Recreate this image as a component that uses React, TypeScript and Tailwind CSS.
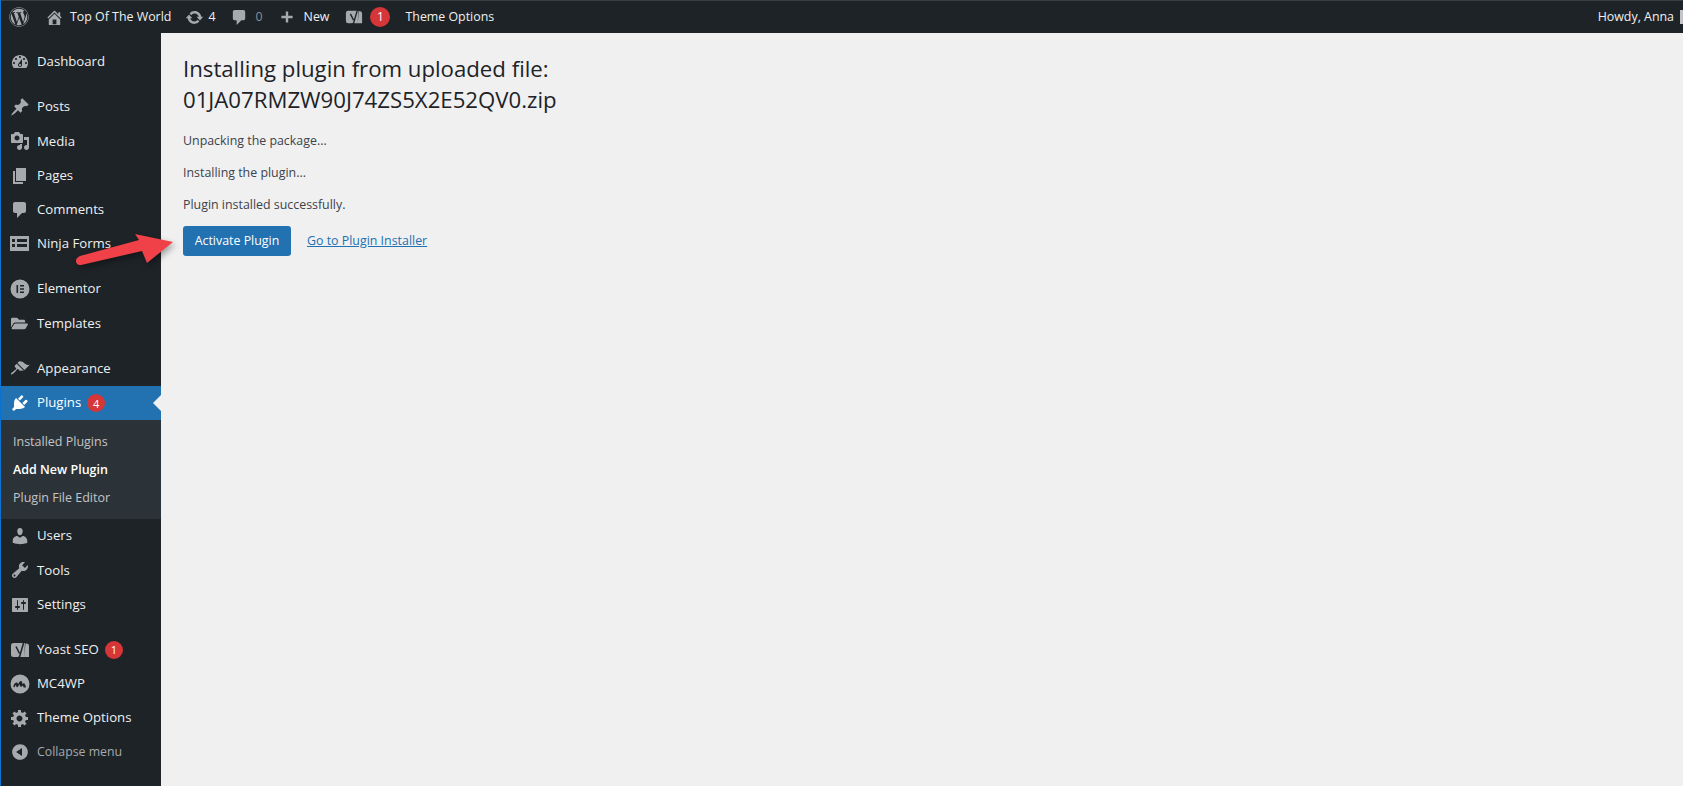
import React from 'react';
import { FaWordpress, FaFolderOpen } from 'react-icons/fa';

const font = 'font-["Open_Sans",sans-serif]';

// dashicons, redrawn inline at their own 20x20 grid
const icons: Record<string, string> = {
  home: 'M16 8.5l1.53 1.53-1.06 1.06L10 4.62l-6.47 6.47-1.06-1.06L10 2.5l4 4v-2h2v4zm-6-2.46l6 5.99V18H4v-5.97zM12 17v-5H8v5h4z',
  update: 'M10.2 3.28c3.53 0 6.43 2.61 6.92 6h2.08l-3.5 4-3.5-4h2.32c-.45-1.97-2.21-3.45-4.32-3.45-1.45 0-2.73.71-3.54 1.78L4.95 5.66C6.23 4.2 8.11 3.28 10.2 3.28zm-.4 13.44c-3.52 0-6.43-2.61-6.92-6H.8l3.5-4c1.17 1.33 2.33 2.67 3.5 4H5.48c.45 1.97 2.21 3.45 4.32 3.45 1.45 0 2.73-.71 3.54-1.78l1.71 1.95c-1.28 1.46-3.15 2.38-5.25 2.38z',
  comment: 'M5 2h9c1.1 0 2 .9 2 2v7c0 1.1-.9 2-2 2h-2l-5 5v-5H5c-1.1 0-2-.9-2-2V4c0-1.1.9-2 2-2z',
  plus: 'M17 8.5v3h-5.5V17h-3v-5.5H3v-3h5.5V3h3v5.5z',
  dashboard: 'M3.76 16h12.48c1.1-1.37 1.76-3.11 1.76-5 0-4.42-3.58-8-8-8s-8 3.58-8 8c0 1.89.66 3.63 1.76 5zM10 4c.55 0 1 .45 1 1s-.45 1-1 1-1-.45-1-1 .45-1 1-1zM6 6c.55 0 1 .45 1 1s-.45 1-1 1-1-.45-1-1 .45-1 1-1zm8 0c.55 0 1 .45 1 1s-.45 1-1 1-1-.45-1-1 .45-1 1-1zm-5.37 5.55L12 7v6c0 1.1-.9 2-2 2s-2-.9-2-2c0-.57.24-1.08.63-1.45zM4 10c.55 0 1 .45 1 1s-.45 1-1 1-1-.45-1-1 .45-1 1-1zm12 0c.55 0 1 .45 1 1s-.45 1-1 1-1-.45-1-1 .45-1 1-1zm-5 3c0-.55-.45-1-1-1s-1 .45-1 1 .45 1 1 1 1-.45 1-1z',
  pin: 'M10.44 3.02l1.82-1.82 6.36 6.35-1.83 1.82c-1.05-.68-2.48-.57-3.41.36l-.75.75c-.92.93-1.04 2.35-.35 3.41l-1.83 1.82-2.41-2.41-2.8 2.79c-.42.42-3.38 2.71-3.8 2.29s1.86-3.39 2.28-3.81l2.79-2.79L4.1 9.36l1.83-1.82c1.05.69 2.48.57 3.4-.36l.75-.75c.93-.92 1.05-2.35.36-3.41z',
  media: 'M13 11V4c0-.55-.45-1-1-1h-1.67L9 1H5L3.67 3H2c-.55 0-1 .45-1 1v7c0 .55.45 1 1 1h10c.55 0 1-.45 1-1zM7 4.5c1.38 0 2.5 1.12 2.5 2.5S8.38 9.5 7 9.5 4.5 8.38 4.5 7 5.62 4.5 7 4.5zM14 6h5v10.5c0 1.38-1.12 2.5-2.5 2.5S14 17.88 14 16.5s1.12-2.5 2.5-2.5c.17 0 .34.02.5.05V9h-3V6zm-4 8.05V13h2v3.5c0 1.38-1.12 2.5-2.5 2.5S7 17.88 7 16.5 8.12 14 9.5 14c.17 0 .34.02.5.05z',
  page: 'M6 15V2h10v13H6zm-1 1h8v2H3V5h2v11z',
  appearance: 'M14.48 11.06L7.41 3.99l1.5-1.5c.5-.56 2.3-.47 3.51.32 1.21.8 1.43 1.28 2.91 2.1 1.18.64 2.45 1.26 4.45.85zm-.71.71L6.7 4.7 4.93 6.47c-.39.39-.39 1.02 0 1.41l1.06 1.06c.39.39.39 1.03 0 1.42-.6.6-1.43 1.11-2.21 1.69-.35.26-.7.53-1.01.84C1.43 13.23.4 14.75 1.02 15.37c.62.61 2.14-.41 3.47-1.75.31-.31.59-.66.85-1.01.58-.78 1.08-1.61 1.69-2.21.39-.39 1.02-.39 1.41 0l1.06 1.06c.39.39 1.02.39 1.41 0z',
  plugin: 'M13.11 4.36L9.87 7.6 8 5.73l3.24-3.24c.35-.34 1.05-.2 1.56.32.52.51.66 1.21.31 1.55zm-8 1.77l.91-1.12 9.01 9.01-1.19.84c-.71.71-2.63 1.16-3.82 1.16H6.14L4.9 17.26c-.59.59-1.54.59-2.12 0-.59-.58-.59-1.53 0-2.12l1.24-1.24v-3.88c0-1.13.4-3.19 1.09-3.89zm7.26 3.97l3.24-3.24c.34-.35 1.04-.21 1.55.31.52.51.66 1.21.31 1.55l-3.24 3.25z',
  users: 'M10 9.25c-2.27 0-2.73-3.44-2.73-3.44C7 4.02 7.82 2 9.97 2c2.16 0 2.98 2.02 2.71 3.81 0 0-.41 3.44-2.68 3.44zm0 2.57L12.72 10c2.39 0 4.52 2.33 4.52 4.53v2.49s-3.65 1.13-7.24 1.13c-3.65 0-7.24-1.13-7.24-1.13v-2.49c0-2.25 1.94-4.48 4.47-4.48z',
  tools: 'M16.68 9.77c-1.34 1.34-3.3 1.67-4.95.99l-5.41 6.52c-.99.99-2.59.99-3.58 0s-.99-2.59 0-3.57l6.52-5.42c-.68-1.65-.35-3.61.99-4.95 1.28-1.28 3.12-1.62 4.72-1.06l-2.89 2.89 2.82 2.82 2.86-2.87c.53 1.58.18 3.39-1.08 4.65zM3.81 16.21c.4.39 1.04.39 1.43 0 .4-.4.4-1.04 0-1.43-.39-.4-1.03-.4-1.43 0-.39.39-.39 1.03 0 1.43z',
  settings: 'M18 16V4c0-.55-.45-1-1-1H3c-.55 0-1 .45-1 1v12c0 .55.45 1 1 1h14c.55 0 1-.45 1-1zM8 11h1c.55 0 1 .45 1 1s-.45 1-1 1H8v1.5c0 .28-.22.5-.5.5s-.5-.22-.5-.5V13H6c-.55 0-1-.45-1-1s.45-1 1-1h1V5.5c0-.28.22-.5.5-.5s.5.22.5.5V11zm5-2h-1c-.55 0-1-.45-1-1s.45-1 1-1h1V5.5c0-.28.22-.5.5-.5s.5.22.5.5V7h1c.55 0 1 .45 1 1s-.45 1-1 1h-1v5.5c0 .28-.22.5-.5.5s-.5-.22-.5-.5V9z',
  gear: 'M18 12h-2.18c-.17.7-.44 1.35-.81 1.93l1.54 1.54-2.1 2.1-1.54-1.54c-.58.36-1.23.63-1.91.79V19H8v-2.18c-.68-.16-1.33-.43-1.91-.79l-1.54 1.54-2.12-2.12 1.54-1.54c-.36-.58-.63-1.23-.79-1.91H1V9.03h2.17c.16-.7.44-1.35.8-1.94L2.43 5.55l2.1-2.1 1.54 1.54c.58-.37 1.24-.64 1.93-.81V2h3v2.18c.68.16 1.33.43 1.91.79l1.54-1.54 2.12 2.12-1.54 1.54c.36.59.64 1.24.8 1.94H18V12zm-8.5 1.5c1.66 0 3-1.34 3-3s-1.34-3-3-3-3 1.34-3 3 1.34 3 3 3z',
  collapse: 'M10 2.16c4.33 0 7.84 3.51 7.84 7.84s-3.51 7.84-7.84 7.84S2.16 14.33 2.16 10 5.71 2.16 10 2.16zm2 11.72V6.12L6.18 9.97z',
  forms: 'M0 2h19v15H0zM2 5v3h3V5zM7 5v3h10V5zM2 10v3h3v-3zM7 10v3h10v-3z',
  elementor: 'M10 .5a9.5 9.5 0 1 0 0 19 9.5 9.5 0 0 0 0-19zM6.5 6h1.6v8H6.5zM10 6h4v1.6h-4zM10 9.2h4v1.6h-4zM10 12.4h4V14h-4z',
  mc4wp: 'M10 .5a9.5 9.5 0 1 0 0 19 9.5 9.5 0 0 0 0-19zM3.5 11.5c1-2.5 2.5-3.5 3.5-3 .8.4.8 1.2 1 1.8.8-1.6 2-3.6 3.2-3.3 1 .3 1 2 1.3 3 .5-.5 1.3-.9 1.9-.4.8.7 1.2 2.2 1.6 3.9h-2.4c-.3-1-.5-1.7-.9-2-.4.5-1 1.3-1.8 1.3-1 0-1.1-1.6-1.4-2.6-.7 1-1.3 2.8-2.2 3-1 .2-1.2-1.4-1.5-2.1-.5.5-1 1.5-1.3 2.2-.8 0-1.5-.7-1-1.8z',
};

const Dash = ({ name, size = 20 }: { name: string; size?: number }) => (
  <svg viewBox="0 0 20 20" width={size} height={size} fill="currentColor" fillRule="evenodd">
    <path d={icons[name]} />
  </svg>
);

const YoastIcon = ({ size = 20 }: { size?: number }) => (
  <svg viewBox="0 0 20 20" width={size} height={size}>
    <path fill="currentColor" d="M3.5 3h11.5l-1 14H3.5A2.5 2.5 0 0 1 1 14.5v-9A2.5 2.5 0 0 1 3.5 3zM15.5 3.5h1A2.5 2.5 0 0 1 19 6v11h-5z" />
    <path fill="none" stroke="#1d2327" strokeWidth="1.5" d="M6 6.5l3.5 7M14 1.5L9.5 17 6.5 18.5" />
  </svg>
);

const Badge = ({ n }: { n: number }) => (
  <span className="ml-[6px] flex h-[18px] w-[18px] items-center justify-center rounded-full bg-[#d63638] text-[11px] leading-none text-white">
    {n}
  </span>
);

const Row = ({ icon, label, badge }: { icon: React.ReactNode; label: string; badge?: number }) => (
  <div className="flex h-[34.2px] items-center text-[13.2px] text-[#f0f0f1]">
    <span className="flex w-[36px] justify-center pl-[1px] text-[#a7aaad]">{icon}</span>
    <span>{label}</span>
    {badge ? <Badge n={badge} /> : null}
  </div>
);

export default function App() {
  return (
    <div className={`${font} relative flex h-[786px] w-full flex-col overflow-hidden border-l border-[#0a72d0] bg-[#f0f0f1]`}>
      {/* top bar */}
      <header className="flex h-[33px] shrink-0 items-center border-t border-[#3a3f44] bg-[#1d2327] text-[12.4px] text-[#f0f0f1]">
        <span className="ml-[7px] flex w-[21px] justify-center text-[#a7aaad]"><FaWordpress size={20} /></span>
        <span className="ml-[16px] text-[#a7aaad]"><Dash name="home" size={19} /></span>
        <span className="ml-[6px]">Top Of The World</span>
        <span className="ml-[14px] text-[#a7aaad]"><Dash name="update" size={19} /></span>
        <span className="ml-[4px]">4</span>
        <span className="ml-[15px] text-[#a7aaad]"><Dash name="comment" size={19} /></span>
        <span className="ml-[6px] text-[#8c8f94]">0</span>
        <span className="ml-[16px] text-[#a7aaad]"><Dash name="plus" size={16} /></span>
        <span className="ml-[9px]">New</span>
        <span className="ml-[16px] text-[#a7aaad]"><YoastIcon size={18} /></span>
        <span className="ml-[7px] flex h-[20px] w-[20px] items-center justify-center rounded-full bg-[#d63638] text-[12px] leading-none text-white">1</span>
        <span className="ml-[15px]">Theme Options</span>
        <span className="ml-auto">Howdy, Anna</span>
        <span className="ml-[6px] h-[14px] w-[3px] bg-[#c3c4c7]" />
      </header>

      <div className="flex min-h-0 flex-1">
        {/* side menu */}
        <aside className="w-[160px] shrink-0 bg-[#1d2327] pt-[12px]">
          <Row icon={<Dash name="dashboard" />} label="Dashboard" />
          <div className="h-[11px]" />
          <Row icon={<Dash name="pin" />} label="Posts" />
          <Row icon={<Dash name="media" />} label="Media" />
          <Row icon={<Dash name="page" />} label="Pages" />
          <Row icon={<Dash name="comment" />} label="Comments" />
          <Row icon={<Dash name="forms" />} label="Ninja Forms" />
          <div className="h-[11px]" />
          <Row icon={<Dash name="elementor" />} label="Elementor" />
          <Row icon={<FaFolderOpen size={17} />} label="Templates" />
          <div className="h-[11.5px]" />
          <Row icon={<Dash name="appearance" />} label="Appearance" />
          <div className="relative flex h-[34px] items-center bg-[#2271b1] text-[13.2px] text-white">
            <span className="flex w-[36px] justify-center pl-[1px]"><Dash name="plugin" /></span>
            <span>Plugins</span>
            <Badge n={4} />
            <span className="absolute right-0 top-[9px] h-0 w-0 border-y-[8px] border-r-[8px] border-y-transparent border-r-[#f0f0f1]" />
          </div>
          <div className="flex h-[99px] flex-col justify-center gap-[6px] bg-[#2c3338] pl-[12px] text-[12.5px] text-[#c3c4c7]">
            <div className="leading-[22px]">Installed Plugins</div>
            <div className="font-semibold leading-[22px] text-white">Add New Plugin</div>
            <div className="leading-[22px]">Plugin File Editor</div>
          </div>
          <Row icon={<Dash name="users" />} label="Users" />
          <Row icon={<Dash name="tools" />} label="Tools" />
          <Row icon={<Dash name="settings" />} label="Settings" />
          <div className="h-[11px]" />
          <Row icon={<YoastIcon />} label="Yoast SEO" badge={1} />
          <Row icon={<Dash name="mc4wp" />} label="MC4WP" />
          <Row icon={<Dash name="gear" />} label="Theme Options" />
          <div className="flex h-[34.2px] items-center text-[12.3px] text-[#a7aaad]">
            <span className="flex w-[36px] justify-center pl-[1px]"><Dash name="collapse" /></span>
            <span>Collapse menu</span>
          </div>
        </aside>

        {/* content */}
        <main className="pl-[22px] pt-[20px] text-[#3c434a]">
          <h1 className="w-[420px] text-[22.2px] font-normal leading-[31px] text-[#1d2327]">
            Installing plugin from uploaded file: 01JA07RMZW90J74ZS5X2E52QV0.zip
          </h1>
          <p className="mt-[16px] text-[12.4px] leading-[20px]">Unpacking the package...</p>
          <p className="mt-[12px] text-[12.4px] leading-[20px]">Installing the plugin...</p>
          <p className="mt-[12px] text-[12.4px] leading-[20px]">Plugin installed successfully.</p>
          <div className="mt-[11px] flex items-center">
            <button className="h-[30px] w-[108px] rounded-[3px] bg-[#2271b1] text-[12.4px] text-white">Activate Plugin</button>
            <a className="ml-[16px] text-[12.4px] text-[#2271b1] underline">Go to Plugin Installer</a>
          </div>
        </main>
      </div>

      {/* red annotation arrow */}
      <svg className="absolute left-[70px] top-[228px] h-[45px] w-[110px] drop-shadow-[2px_3px_3px_rgba(0,0,0,0.35)]" viewBox="0 0 110 45">
        <path fill="#f04148" d="M102 14 76 35 71 23 10 37C4 38 3 30 9 28L68 12 64 6z" />
      </svg>
    </div>
  );
}
